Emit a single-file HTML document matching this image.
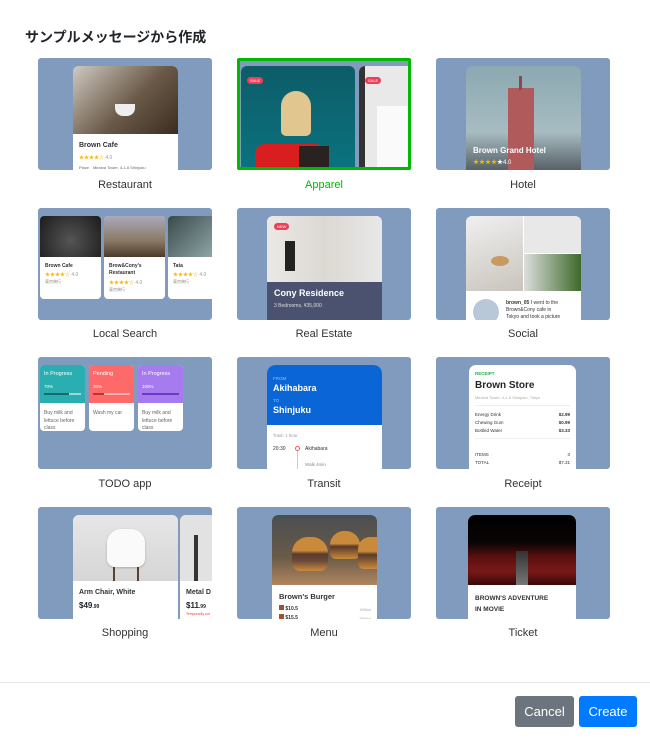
<!DOCTYPE html><html><head><meta charset="utf-8"><style>
*{box-sizing:border-box;margin:0;padding:0}
body{width:650px;height:740px;background:#fff;font-family:"Liberation Sans","Noto Sans CJK JP",sans-serif;position:relative;overflow:hidden;color:#212529}
h1{position:absolute;left:25px;top:27px;font-size:14px;font-weight:bold;font-family:"Noto Sans CJK JP",sans-serif}
.t{position:absolute;width:174px;height:112px;background:#809bbd;border-radius:3px;overflow:hidden}
.l{position:absolute;width:174px;text-align:center;font-size:11px;color:#333}
.c{position:absolute;background:#fff;border-radius:6px 6px 0 0;overflow:hidden}
.a{position:absolute}
.s{font-size:6px;color:#333}
.b{font-weight:bold}
.st{color:#f5b800;font-size:5px}
</style></head><body>
<h1>サンプルメッセージから作成</h1>

<div class="t" style="left:38px;top:58px">
 <div class="c" style="left:35px;top:8px;width:105px;height:110px">
  <div class="a" style="left:0;top:0;width:105px;height:68px;background:linear-gradient(135deg,#cfc9c2,#6b5a48 55%,#3a2c20)"></div>
  <div class="a" style="left:42px;top:38px;width:20px;height:12px;border-radius:0 0 8px 8px;background:#eee"></div>
  <div class="a s b" style="left:6px;top:76px;font-size:7px">Brown Cafe</div>
  <div class="a st" style="left:6px;top:88px">★★★★☆ <span style="color:#999">4.0</span></div>
  <div class="a s" style="left:6px;top:99px;font-size:4px;color:#666">Place　Miraina Tower, 4-1-6 Shinjuku</div>
 </div>
</div>
<div class="l" style="left:38px;top:179px">Restaurant</div>

<div class="t" style="left:237px;top:58px;border:3px solid #00b900;border-radius:2px">
 <div class="c" style="left:1px;top:5px;width:114px;height:110px;border-radius:6px;background:linear-gradient(180deg,#0d5c68,#0a7480)">
  <div class="a" style="left:40px;top:25px;width:30px;height:45px;border-radius:15px 15px 5px 5px;background:#e2c690"></div>
  <div class="a" style="left:14px;top:78px;width:70px;height:30px;background:#d81e1e;border-radius:10px 10px 0 0"></div>
  <div class="a" style="left:58px;top:80px;width:30px;height:30px;background:#2a2220"></div>
  <div class="a" style="left:6px;top:11px;background:#ef3e55;color:#fff;font-size:4px;padding:1px 3px;border-radius:4px">SALE</div>
 </div>
 <div class="c" style="left:119px;top:5px;width:60px;height:110px;border-radius:6px;background:#e9e9e9">
  <div class="a" style="left:0;top:0;width:6px;height:110px;background:#333"></div>
  <div class="a" style="left:6px;top:11px;background:#ef3e55;color:#fff;font-size:4px;padding:1px 3px;border-radius:4px">SALE</div>
  <div class="a" style="left:18px;top:40px;width:40px;height:70px;background:#fafafa"></div>
 </div>
</div>
<div class="l" style="left:237px;top:179px;color:#00b900">Apparel</div>

<div class="t" style="left:436px;top:58px">
 <div class="c" style="left:30px;top:8px;width:115px;height:110px;background:linear-gradient(180deg,#8ca8b0,#a7bcc2 60%,#4a5358)">
  <div class="a" style="left:42px;top:22px;width:26px;height:90px;background:#b05a5c"></div>
  <div class="a" style="left:53px;top:10px;width:3px;height:14px;background:#8b4a4a"></div>
  <div class="a b" style="left:7px;top:80px;color:#fff;font-size:8px">Brown Grand Hotel</div>
  <div class="a st" style="left:7px;top:91px;font-size:6px">★★★★<span style="color:#fff">★4.0</span></div>
 </div>
</div>
<div class="l" style="left:436px;top:179px">Hotel</div>

<div class="t" style="left:38px;top:208px">
 <div class="c" style="left:2px;top:8px;width:61px;height:83px;border-radius:4px">
  <div class="a" style="left:0;top:0;width:61px;height:41px;background:radial-gradient(circle at 50% 60%,#555,#1b1b1b)"></div>
  <div class="a s b" style="left:5px;top:47px;font-size:5px">Brown Cafe</div>
  <div class="a st" style="left:5px;top:55px">★★★★☆ <span style="color:#999">4.0</span></div>
  <div class="a s" style="left:5px;top:63px;font-size:4px;color:#888">東京旅行</div>
 </div>
 <div class="c" style="left:66px;top:8px;width:61px;height:83px;border-radius:4px">
  <div class="a" style="left:0;top:0;width:61px;height:41px;background:linear-gradient(180deg,#aab 0,#8a7a66 60%,#4a3a2a)"></div>
  <div class="a s b" style="left:5px;top:47px;font-size:5px;line-height:7px">Brow&amp;Cony's<br>Restaurant</div>
  <div class="a st" style="left:5px;top:63px">★★★★☆ <span style="color:#999">4.0</span></div>
  <div class="a s" style="left:5px;top:71px;font-size:4px;color:#888">東京旅行</div>
 </div>
 <div class="c" style="left:130px;top:8px;width:61px;height:83px;border-radius:4px">
  <div class="a" style="left:0;top:0;width:61px;height:41px;background:linear-gradient(135deg,#3a4a4a,#9fb6b8)"></div>
  <div class="a s b" style="left:5px;top:47px;font-size:5px">Tata</div>
  <div class="a st" style="left:5px;top:55px">★★★★☆ <span style="color:#999">4.0</span></div>
  <div class="a s" style="left:5px;top:63px;font-size:4px;color:#888">東京旅行</div>
 </div>
</div>
<div class="l" style="left:38px;top:328px">Local Search</div>

<div class="t" style="left:237px;top:208px">
 <div class="c" style="left:30px;top:8px;width:115px;height:110px">
  <div class="a" style="left:0;top:0;width:115px;height:66px;background:linear-gradient(90deg,#ebe9e6,#dcd8d2 50%,#e8e8e8)"></div>
  <div class="a" style="left:18px;top:25px;width:10px;height:30px;background:#222"></div>
  <div class="a" style="left:0;top:66px;width:115px;height:44px;background:#4a5270"></div>
  <div class="a" style="left:7px;top:7px;background:#ef3e55;color:#fff;font-size:4px;padding:1px 3px;border-radius:4px">NEW</div>
  <div class="a b" style="left:7px;top:72px;color:#fff;font-size:9px">Cony Residence</div>
  <div class="a" style="left:7px;top:87px;color:#ddd;font-size:5px">3 Bedrooms, ¥35,000</div>
 </div>
</div>
<div class="l" style="left:237px;top:328px">Real Estate</div>

<div class="t" style="left:436px;top:208px">
 <div class="c" style="left:30px;top:8px;width:115px;height:110px">
  <div class="a" style="left:0;top:0;width:57px;height:75px;background:linear-gradient(160deg,#f0f0f0,#c9c4bc)"></div>
  <div class="a" style="left:25px;top:40px;width:18px;height:10px;border-radius:50%;background:#c99a60"></div>
  <div class="a" style="left:58px;top:0;width:57px;height:37px;background:#e8e8e8"></div>
  <div class="a" style="left:58px;top:38px;width:57px;height:37px;background:linear-gradient(90deg,#ddd,#3d6a2a)"></div>
  <div class="a" style="left:7px;top:83px;width:26px;height:26px;border-radius:50%;background:#b8c8d8"></div>
  <div class="a s" style="left:40px;top:84px;font-size:5px;line-height:7px"><b>brown_05</b> I went to the<br>Brown&amp;Cony cafe in<br>Tokyo and took a picture</div>
 </div>
</div>
<div class="l" style="left:436px;top:328px">Social</div>

<div class="t" style="left:38px;top:357px">
 <div class="c" style="left:2px;top:8px;width:45px;height:66px;border-radius:4px">
  <div class="a" style="left:0;top:0;width:45px;height:38px;background:#2aaeaf"></div>
  <div class="a" style="left:4px;top:6px;color:#fff;font-size:5.5px">In Progress</div>
  <div class="a" style="left:4px;top:19px;color:#fff;font-size:4.5px">70%</div>
  <div class="a" style="left:4px;top:28px;width:37px;height:2px;background:#9fd8d8"></div>
  <div class="a" style="left:4px;top:28px;width:25px;height:2px;background:#126b6b"></div>
  <div class="a s" style="left:4px;top:45px;font-size:5px;line-height:7.5px;color:#666">Buy milk and<br>lettuce before<br>class</div>
 </div>
 <div class="c" style="left:51px;top:8px;width:45px;height:66px;border-radius:4px">
  <div class="a" style="left:0;top:0;width:45px;height:38px;background:#fe6a6a"></div>
  <div class="a" style="left:4px;top:6px;color:#fff;font-size:5.5px">Pending</div>
  <div class="a" style="left:4px;top:19px;color:#fff;font-size:4.5px">30%</div>
  <div class="a" style="left:4px;top:28px;width:37px;height:2px;background:#ffb0b0"></div>
  <div class="a" style="left:4px;top:28px;width:11px;height:2px;background:#b33"></div>
  <div class="a s" style="left:4px;top:45px;font-size:5px;color:#666">Wash my car</div>
 </div>
 <div class="c" style="left:100px;top:8px;width:45px;height:66px;border-radius:4px">
  <div class="a" style="left:0;top:0;width:45px;height:38px;background:#a67bf0"></div>
  <div class="a" style="left:4px;top:6px;color:#fff;font-size:5.5px">In Progress</div>
  <div class="a" style="left:4px;top:19px;color:#fff;font-size:4.5px">100%</div>
  <div class="a" style="left:4px;top:28px;width:37px;height:2px;background:#6a3ac0"></div>
  <div class="a s" style="left:4px;top:45px;font-size:5px;line-height:7.5px;color:#666">Buy milk and<br>lettuce before<br>class</div>
 </div>
</div>
<div class="l" style="left:38px;top:478px">TODO app</div>

<div class="t" style="left:237px;top:357px">
 <div class="c" style="left:30px;top:8px;width:115px;height:110px;border-radius:8px 8px 0 0">
  <div class="a" style="left:0;top:0;width:115px;height:60px;background:#0a66d6"></div>
  <div class="a" style="left:6px;top:11px;color:#9cc0ee;font-size:4.5px">FROM</div>
  <div class="a b" style="left:6px;top:18px;color:#fff;font-size:9px">Akihabara</div>
  <div class="a" style="left:6px;top:33px;color:#9cc0ee;font-size:4.5px">TO</div>
  <div class="a b" style="left:6px;top:40px;color:#fff;font-size:9px">Shinjuku</div>
  <div class="a" style="left:6px;top:68px;color:#999;font-size:4.5px">Total: 1 hour</div>
  <div class="a s" style="left:6px;top:81px;font-size:5px">20:30</div>
  <div class="a" style="left:28px;top:81px;width:5px;height:5px;border:1px solid #f55;border-radius:50%"></div>
  <div class="a" style="left:30px;top:86px;width:1px;height:24px;background:#ccc"></div>
  <div class="a s" style="left:38px;top:81px;font-size:5px">Akihabara</div>
  <div class="a s" style="left:38px;top:97px;font-size:4.5px;color:#888">Walk 4min</div>
 </div>
</div>
<div class="l" style="left:237px;top:478px">Transit</div>

<div class="t" style="left:436px;top:357px">
 <div class="c" style="left:33px;top:8px;width:107px;height:110px;border-radius:7px 7px 0 0">
  <div class="a b" style="left:6px;top:6px;color:#1db446;font-size:4.5px">RECEIPT</div>
  <div class="a b" style="left:6px;top:15px;font-size:10px">Brown Store</div>
  <div class="a" style="left:6px;top:30px;color:#aaa;font-size:4px">Miraina Tower, 4-1-6 Shinjuku, Tokyo</div>
  <div class="a" style="left:6px;top:40px;width:95px;height:1px;background:#eee"></div>
  <div class="a s" style="left:6px;top:46px;width:95px;font-size:4.5px;line-height:8px">Energy Drink<span style="float:right" class="b">$2.99</span><br>Chewing Gum<span style="float:right" class="b">$0.99</span><br>Bottled Water<span style="float:right" class="b">$3.33</span></div>
  <div class="a" style="left:6px;top:73px;width:95px;height:1px;background:#eee"></div>
  <div class="a s" style="left:6px;top:86px;width:95px;font-size:4.5px;line-height:8px">ITEMS<span style="float:right">3</span><br>TOTAL<span style="float:right">$7.31</span></div>
 </div>
</div>
<div class="l" style="left:436px;top:478px">Receipt</div>

<div class="t" style="left:38px;top:507px">
 <div class="c" style="left:35px;top:8px;width:105px;height:110px">
  <div class="a" style="left:0;top:0;width:105px;height:66px;background:linear-gradient(180deg,#e6e6e6,#d6d6d6)"></div>
  <div class="a" style="left:34px;top:14px;width:38px;height:38px;border-radius:14px 14px 8px 8px;background:#fafafa;box-shadow:0 1px 2px #aaa"></div>
  <div class="a" style="left:40px;top:52px;width:26px;height:14px;border-left:2px solid #5a4030;border-right:2px solid #5a4030"></div>
  <div class="a b s" style="left:6px;top:74px;font-size:7px">Arm Chair, White</div>
  <div class="a b" style="left:6px;top:86px;font-size:8px">$49<span style="font-size:5px">.99</span></div>
 </div>
 <div class="c" style="left:142px;top:8px;width:40px;height:110px">
  <div class="a" style="left:0;top:0;width:40px;height:66px;background:#e2e2e2"></div>
  <div class="a" style="left:14px;top:20px;width:4px;height:46px;background:#333"></div>
  <div class="a b s" style="left:6px;top:74px;font-size:7px;white-space:nowrap">Metal D</div>
  <div class="a b" style="left:6px;top:86px;font-size:8px">$11<span style="font-size:5px">.99</span></div>
  <div class="a" style="left:6px;top:97px;font-size:3.5px;color:#f33;white-space:nowrap">Temporarily out</div>
 </div>
</div>
<div class="l" style="left:38px;top:627px">Shopping</div>

<div class="t" style="left:237px;top:507px">
 <div class="c" style="left:35px;top:8px;width:105px;height:110px">
  <div class="a" style="left:0;top:0;width:105px;height:70px;background:linear-gradient(180deg,#4a4e52,#6a5a48 60%,#b08660)"></div>
  <div class="a" style="left:20px;top:22px;width:36px;height:34px;border-radius:16px 16px 8px 8px;background:linear-gradient(180deg,#c98a3c,#c98a3c 40%,#5a3a2a 50%,#6a4a38 70%,#c98a3c)"></div>
  <div class="a" style="left:58px;top:16px;width:30px;height:28px;border-radius:14px 14px 6px 6px;background:linear-gradient(180deg,#c98a3c,#c98a3c 45%,#5a3a2a 55%,#c98a3c)"></div>
  <div class="a" style="left:86px;top:22px;width:24px;height:32px;border-radius:12px 0 0 6px;background:linear-gradient(180deg,#c98a3c,#c98a3c 45%,#5a3a2a 55%,#c98a3c)"></div>
  <div class="a b s" style="left:7px;top:77px;font-size:7.5px">Brown's Burger</div>
  <div class="a s b" style="left:7px;top:90px;width:92px;font-size:5px;line-height:9px"><span style="display:inline-block;width:5px;height:5px;background:#a0522d"></span> $10.5<span style="float:right;font-weight:normal;color:#aaa;font-size:4px">400kcl</span><br><span style="display:inline-block;width:5px;height:5px;background:#a0522d"></span> $15.5<span style="float:right;font-weight:normal;color:#aaa;font-size:4px">550kcl</span></div>
 </div>
</div>
<div class="l" style="left:237px;top:627px">Menu</div>

<div class="t" style="left:436px;top:507px">
 <div class="c" style="left:32px;top:8px;width:108px;height:110px;border-radius:7px 7px 0 0">
  <div class="a" style="left:0;top:0;width:108px;height:70px;background:linear-gradient(180deg,#000 0,#0a0505 40%,#5a1010 60%,#7a1818 80%,#3a0808)"></div>
  <div class="a" style="left:48px;top:36px;width:12px;height:34px;background:linear-gradient(180deg,#333,#777)"></div>
  <div class="a b s" style="left:7px;top:78px;font-size:6.5px;line-height:11px;color:#333">BROWN'S ADVENTURE<br>IN MOVIE</div>
 </div>
</div>
<div class="l" style="left:436px;top:627px">Ticket</div>

<div class="a" style="left:0;top:682px;width:650px;height:1px;background:#e5e5e5"></div>
<div class="a" style="left:515px;top:696px;width:59px;height:31px;background:#6c757d;border-radius:3px;color:#fff;font-size:13px;text-align:center;line-height:31px">Cancel</div>
<div class="a" style="left:579px;top:696px;width:58px;height:31px;background:#007bff;border-radius:3px;color:#fff;font-size:13px;text-align:center;line-height:31px">Create</div>
</body></html>
